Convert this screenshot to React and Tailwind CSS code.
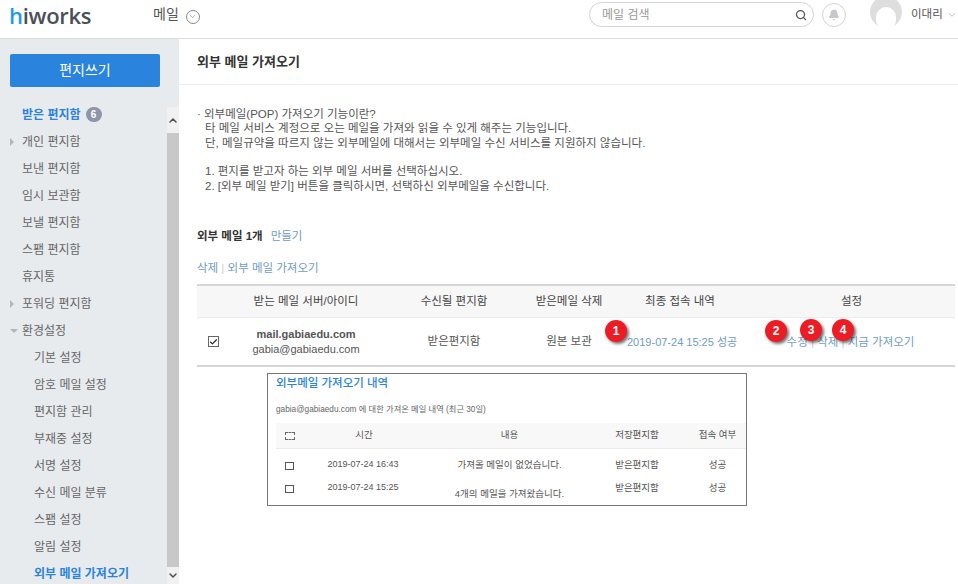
import React from 'react'
import { ChevronDown, ChevronUp, Search, Bell, Check } from 'lucide-react'

const FONT = "font-['Liberation_Sans','Noto_Sans_CJK_KR',sans-serif]"

const topItems = [
  { label: '개인 편지함', arrow: 'right' },
  { label: '보낸 편지함' },
  { label: '임시 보관함' },
  { label: '보낼 편지함' },
  { label: '스팸 편지함' },
  { label: '휴지통' },
  { label: '포워딩 편지함', arrow: 'right' },
  { label: '환경설정', arrow: 'down' },
]

const subItems = ['기본 설정', '암호 메일 설정', '편지함 관리', '부재중 설정', '서명 설정', '수신 메일 분류', '스팸 설정', '알림 설정']

const Badge = ({ n, className }) => (
  <span
    className={`absolute flex h-[22px] w-[22px] items-center justify-center rounded-full bg-[#ed1c24] text-[12px] font-bold text-white shadow-[2px_2px_3px_rgba(0,0,0,0.55)] ${className}`}
  >
    {n}
  </span>
)

const Header = () => (
  <header className="flex h-[39px] shrink-0 items-center border-b border-[#dcdcdc] bg-white pb-[9px]">
    <div className="ml-[9px] w-[144px] shrink-0 font-['Open_Sans',sans-serif] text-[22px] font-semibold leading-none tracking-[-0.3px] text-[#4a4f57]">
      <span className="text-[#1e9be8]">h</span>iworks
    </div>
    <span className="shrink-0 whitespace-nowrap text-[14px] text-[#555]">메일</span>
    <span className="ml-[7px] mt-[4px] flex h-[14px] w-[14px] shrink-0 items-center justify-center rounded-full border border-[#888] text-[#666]">
      <ChevronDown size={9} strokeWidth={1.5} />
    </span>
    <div className="ml-auto flex h-[25px] w-[225px] shrink-0 items-center rounded-full border border-[#d4d4d4] pl-[12px] pr-[6px] text-[12px] text-[#999]">
      <span>메일 검색</span>
      <Search size={12} strokeWidth={2.5} className="ml-auto text-[#555]" />
    </div>
    <span className="ml-[8px] flex h-[24px] w-[24px] shrink-0 items-center justify-center rounded-full border border-[#d4d4d4] text-[#c4c8cc]">
      <Bell size={12} fill="currentColor" />
    </span>
    <span className="relative ml-[24px] h-[28px] w-[32px] shrink-0 self-start overflow-hidden">
      <span className="absolute left-0 top-[-4px] h-[32px] w-[32px] rounded-full bg-[#dedede]" />
      <span className="absolute left-[6px] top-[7px] h-[23px] w-[20px] rounded-full bg-white" />
    </span>
    <span className="ml-[9px] w-[31px] shrink-0 whitespace-nowrap text-[11.5px] text-[#555]">이대리</span>
    <ChevronDown size={10} className="ml-[5px] mr-[1px] shrink-0 text-[#a9b0b8]" />
  </header>
)

const Sidebar = () => (
  <aside className="flex w-[179px] shrink-0 flex-col overflow-hidden bg-[#e8ebee]">
    <button
      type="button"
      className="ml-[10px] mt-[15px] h-[33px] w-[150px] shrink-0 rounded-[2px] bg-[#2a83dd] text-[14px] text-white"
    >
      편지쓰기
    </button>
    <div className="mt-[14px] flex min-h-0 flex-1">
      <nav className="w-[167px] shrink-0 text-[12px] text-[#666]">
        <div className="flex h-[27px] items-center pl-[22px] font-bold text-[#2a83dd]">
          받은 편지함
          <span className="ml-[5px] flex h-[15px] w-[16px] items-center justify-center rounded-full bg-[#8d96a8] text-[10px] font-bold text-white">
            6
          </span>
        </div>
        {topItems.map((item) => (
          <div key={item.label} className="relative flex h-[27px] items-center pl-[22px]">
            {item.arrow === 'right' && (
              <span className="absolute left-[10px] top-[10px] h-0 w-0 border-y-[4px] border-l-[4px] border-y-transparent border-l-[#b5b5b5]" />
            )}
            {item.arrow === 'down' && (
              <span className="absolute left-[10px] top-[12px] h-0 w-0 border-x-[4px] border-t-[4px] border-x-transparent border-t-[#b5b5b5]" />
            )}
            {item.label}
          </div>
        ))}
        {subItems.map((label) => (
          <div key={label} className="flex h-[27px] items-center pl-[34px]">
            {label}
          </div>
        ))}
        <div className="flex h-[27px] items-center pl-[34px] font-bold text-[#2a83dd]">외부 메일 가져오기</div>
      </nav>
      <div className="mt-[6px] flex w-[12px] shrink-0 flex-col bg-[#f1f1f1]">
        <div className="flex h-[26px] shrink-0 items-center justify-center text-[#505050]">
          <ChevronUp size={13} strokeWidth={3} />
        </div>
        <div className="flex-1 bg-[#c8c8c8]" />
        <div className="flex h-[17px] shrink-0 items-center justify-center text-[#505050]">
          <ChevronDown size={13} strokeWidth={3} />
        </div>
      </div>
    </div>
  </aside>
)

const MailTable = () => (
  <div className="relative mr-[3px] mt-[7px]">
    <table className="w-full table-fixed border-y-2 border-[#d6d6d6] text-[11.5px] text-[#555]">
      <thead>
        <tr className="h-[33px] border-b border-[#ececec] bg-[#f7f7f7] text-center text-[#444]">
          <th className="w-[33px] font-normal"></th>
          <th className="w-[152px] font-normal">받는 메일 서버/아이디</th>
          <th className="w-[144px] font-normal">수신될 편지함</th>
          <th className="w-[86px] font-normal">받은메일 삭제</th>
          <th className="w-[136px] font-normal">최종 접속 내역</th>
          <th className="font-normal">설정</th>
        </tr>
      </thead>
      <tbody>
        <tr className="h-[48px] text-center">
          <td>
            <span className="ml-[11px] flex h-[11px] w-[11px] items-center justify-center border border-[#666] bg-white text-[#222]">
              <Check size={10} strokeWidth={3} />
            </span>
          </td>
          <td className="text-[11px] leading-[15px]">
            <div className="font-bold">mail.gabiaedu.com</div>
            <div>gabia@gabiaedu.com</div>
          </td>
          <td>받은편지함</td>
          <td>원본 보관</td>
          <td className="pt-[2px] text-left text-[11px] text-[#6f9cc4]">
            <span className="ml-[15px] whitespace-nowrap">2019-07-24 15:25 성공</span>
          </td>
          <td className="pt-[3px] text-[#6f9cc4]">
            <span className="ml-[-2px] whitespace-nowrap">
              수정 <span className="text-[#ccc]">|</span> 삭제 <span className="text-[#ccc]">|</span> 지금 가져오기
            </span>
          </td>
        </tr>
      </tbody>
    </table>
    <Badge n="1" className="left-[408px] top-[36px]" />
    <Badge n="2" className="left-[568px] top-[36px]" />
    <Badge n="3" className="left-[603px] top-[35px]" />
    <Badge n="4" className="left-[635px] top-[35px]" />
  </div>
)

const HistoryBox = () => (
  <section className="ml-[70px] mt-[6px] h-[133px] w-[480px] border border-[#777] bg-white pl-[8px] text-[#666]">
    <h3 className="mt-[2px] text-[11.5px] font-medium leading-[14px] text-[#2a83dd]">외부메일 가져오기 내역</h3>
    <p className="mt-[14px] text-[8.25px] leading-[12px]">gabia@gabiaedu.com 에 대한 가져온 메일 내역 (최근 30일)</p>
    <table className="mt-[7px] w-full table-fixed text-[9.5px] text-[#555]">
      <thead>
        <tr className="h-[26px] border-b border-[#ececec] bg-[#f8f8f8] text-center">
          <th className="w-[28px] font-normal">
            <span className="ml-[9px] block h-[8px] w-[10px] border border-dashed border-[#666]" />
          </th>
          <th className="w-[120px] font-normal">시간</th>
          <th className="w-[171px] font-normal">내용</th>
          <th className="w-[84px] font-normal">저장편지함</th>
          <th className="pl-[10px] font-normal">접속 여부</th>
        </tr>
      </thead>
      <tbody className="text-center">
        <tr className="h-[23px] align-bottom">
          <td><span className="ml-[9px] mb-[2px] block h-[8px] w-[9px] border border-[#555]" /></td>
          <td className="pr-[2px] text-[9px]">2019-07-24 16:43</td>
          <td>가져올 메일이 없었습니다.</td>
          <td>받은편지함</td>
          <td className="pl-[10px]">성공</td>
        </tr>
        <tr className="h-[23px] align-bottom">
          <td><span className="ml-[9px] mb-[2px] block h-[8px] w-[9px] border border-[#555]" /></td>
          <td className="pr-[2px] text-[9px]">2019-07-24 15:25</td>
          <td className="translate-y-[6px]">4개의 메일을 가져왔습니다.</td>
          <td>받은편지함</td>
          <td className="pl-[10px]">성공</td>
        </tr>
      </tbody>
    </table>
  </section>
)

export default function App() {
  return (
    <div className={`flex h-[584px] w-[958px] flex-col overflow-hidden bg-white ${FONT}`}>
      <Header />
      <div className="flex min-h-0 flex-1">
        <Sidebar />
        <main className="min-w-0 flex-1 pl-[18px]">
          <div className="ml-[-18px] flex h-[46px] items-center border-b border-[#eeeeee] pl-[18px] pt-[1px] text-[13px] font-bold text-[#333]">
            외부 메일 가져오기
          </div>
          <div className="mt-[22px] whitespace-pre text-[11.5px] leading-[14.25px] text-[#555]">
            <p>· 외부메일(POP) 가져오기 기능이란?</p>
            <p className="pl-[8px]">타 메일 서비스 계정으로 오는 메일을 가져와 읽을 수 있게 해주는 기능입니다.</p>
            <p className="pl-[8px]">단, 메일규약을 따르지 않는 외부메일에 대해서는 외부메일 수신 서비스를 지원하지 않습니다.</p>
            <p className="h-[14.5px]"></p>
            <p className="pl-[8px]">1. 편지를 받고자 하는 외부 메일 서버를 선택하십시오.</p>
            <p className="pl-[8px]">2. [외부 메일 받기] 버튼을 클릭하시면, 선택하신 외부메일을 수신합니다.</p>
          </div>
          <div className="mt-[34px] flex items-center text-[11.5px] leading-[18px]">
            <strong className="font-bold text-[#333]">외부 메일 1개</strong>
            <span className="ml-[8px] text-[#6f9cc4]">만들기</span>
          </div>
          <div className="mt-[14px] text-[11.5px] leading-[18px] text-[#6f9cc4]">
            삭제 <span className="text-[#ccc]">|</span> 외부 메일 가져오기
          </div>
          <MailTable />
          <HistoryBox />
        </main>
      </div>
    </div>
  )
}
